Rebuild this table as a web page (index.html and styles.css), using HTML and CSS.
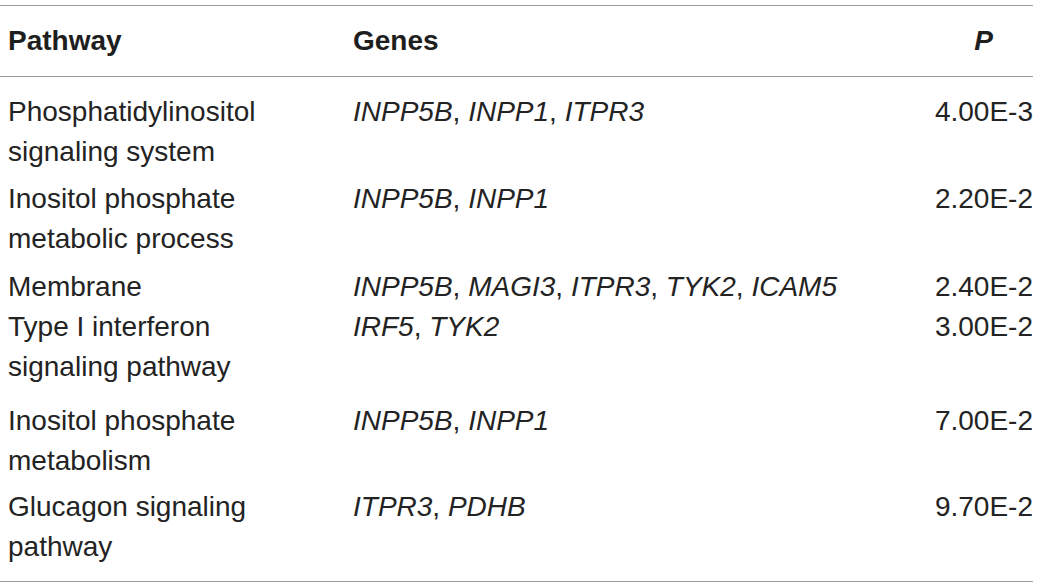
FILE: index.html
```html
<!DOCTYPE html>
<html lang="en">
<head>
<meta charset="utf-8">
<title>Pathway enrichment</title>
<link rel="stylesheet" href="styles.css">
</head>
<body>
<table class="tbl">
  <colgroup>
    <col class="c-path">
    <col class="c-genes">
    <col class="c-p">
  </colgroup>
  <thead>
    <tr>
      <th class="h-path">Pathway</th>
      <th class="h-genes">Genes</th>
      <th class="h-p"><i>P</i></th>
    </tr>
  </thead>
  <tbody>
    <tr class="r1">
      <td>Phosphatidylinositol<br>signaling system</td>
      <td><i>INPP5B</i>, <i>INPP1</i>, <i>ITPR3</i></td>
      <td class="num">4.00E-3</td>
    </tr>
    <tr class="r2">
      <td>Inositol phosphate<br>metabolic process</td>
      <td><i>INPP5B</i>, <i>INPP1</i></td>
      <td class="num">2.20E-2</td>
    </tr>
    <tr class="r3">
      <td>Membrane</td>
      <td><i>INPP5B</i>, <i>MAGI3</i>, <i>ITPR3</i>, <i>TYK2</i>, <i>ICAM5</i></td>
      <td class="num">2.40E-2</td>
    </tr>
    <tr class="r4">
      <td>Type I interferon<br>signaling pathway</td>
      <td><i>IRF5</i>, <i>TYK2</i></td>
      <td class="num">3.00E-2</td>
    </tr>
    <tr class="r5">
      <td>Inositol phosphate<br>metabolism</td>
      <td><i>INPP5B</i>, <i>INPP1</i></td>
      <td class="num">7.00E-2</td>
    </tr>
    <tr class="r6">
      <td>Glucagon signaling<br>pathway</td>
      <td><i>ITPR3</i>, <i>PDHB</i></td>
      <td class="num">9.70E-2</td>
    </tr>
  </tbody>
</table>
</body>
</html>
```

FILE: styles.css
```css
html, body {
  margin: 0;
  padding: 0;
  background: #ffffff;
}

body {
  padding-top: 5px;
  font-family: "Liberation Sans", Arial, sans-serif;
  color: #232323;
}

.tbl {
  width: 1033px;
  border-collapse: collapse;
  table-layout: fixed;
  font-size: 28px;
  line-height: 40px;
  border-top: 1px solid #9d9d9d;
  border-bottom: 1px solid #9d9d9d;
}

.c-path { width: 345px; }
.c-genes { width: 558px; }
.c-p { width: 130px; }

.tbl th {
  font-weight: bold;
  text-align: left;
  padding: 15px 0 15px 8px;
  border-bottom: 1px solid #9d9d9d;
  color: #1e1e1e;
  white-space: nowrap;
}

.tbl th.h-p {
  text-align: right;
  padding-left: 0;
  padding-right: 40px;
}

.tbl td {
  vertical-align: top;
  padding: 6px 0 0 8px;
  font-weight: normal;
}

.r1 td { padding-top: 15px; }
.r2 td { padding-top: 7px; }
.r3 td { padding-top: 8px; }
.r4 td { padding-top: 0; }
.r5 td { padding-top: 14px; }
.r6 td { padding-top: 6px; padding-bottom: 14px; }

.tbl td.num {
  text-align: right;
  padding-left: 0;
  white-space: nowrap;
}

.tbl i {
  font-style: italic;
}
```
